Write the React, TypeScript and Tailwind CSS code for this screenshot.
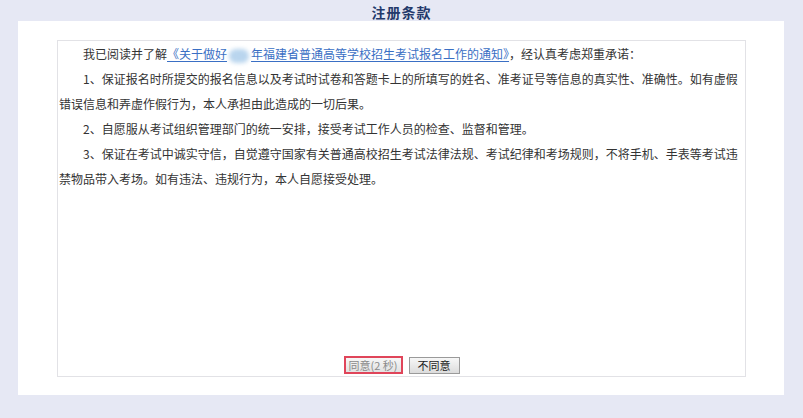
export default function App() {
  return (
    <div
      className="w-[803px] h-[418px] bg-[#e6e8f4] flex flex-col"
      style={{ fontFamily: '"Noto Sans CJK SC", "Noto Sans", sans-serif' }}
    >
      {/* Title */}
      <div className="h-[21px] flex items-center justify-center text-[14px] font-bold text-[#23396b] tracking-[1px] leading-none pt-[2px]">
        注册条款
      </div>

      {/* White panel */}
      <div className="ml-[18px] w-[766px] h-[374px] bg-white pt-[19px] pl-[39px] pr-[38px]">
        <div className="h-[337px] border border-[#e2e2e6] flex flex-col">
          <div className="flex-1 px-[1px] text-[12px] leading-[25px] text-[#333]">
            <p className="indent-[24px]">
              我已阅读并了解
              <a className="text-[#3a6fc4] underline underline-offset-2 cursor-pointer">
                《关于做好
                <span className="inline-block w-[20px] h-[14px] align-middle rounded-[7px] bg-[#b9d5ee] blur-[2px] mx-[2px]" />
                年福建省普通高等学校招生考试报名工作的通知》
              </a>
              ，经认真考虑郑重承诺：
            </p>
            <p className="indent-[24px]">
              1、保证报名时所提交的报名信息以及考试时试卷和答题卡上的所填写的姓名、准考证号等信息的真实性、准确性。如有虚假错误信息和弄虚作假行为，本人承担由此造成的一切后果。
            </p>
            <p className="indent-[24px]">
              2、自愿服从考试组织管理部门的统一安排，接受考试工作人员的检查、监督和管理。
            </p>
            <p className="indent-[24px]">
              3、保证在考试中诚实守信，自觉遵守国家有关普通高校招生考试法律法规、考试纪律和考场规则，不将手机、手表等考试违禁物品带入考场。如有违法、违规行为，本人自愿接受处理。
            </p>
          </div>

          {/* Buttons */}
          <div className="flex justify-center items-end gap-[6px] pb-[2px]">
            <button
              disabled
              className="w-[59px] h-[18px] border-2 border-[#e0455a] bg-gradient-to-b from-[#f7f7f7] to-[#e2e2e2] text-[11px] leading-none text-[#8a8a8a]"
            >
              同意(2 秒)
            </button>
            <button className="w-[51px] h-[17px] border border-[#9a9a9a] bg-gradient-to-b from-[#f7f7f7] to-[#dcdcdc] text-[11px] leading-none text-[#222]">
              不同意
            </button>
          </div>
        </div>
      </div>
    </div>
  );
}
